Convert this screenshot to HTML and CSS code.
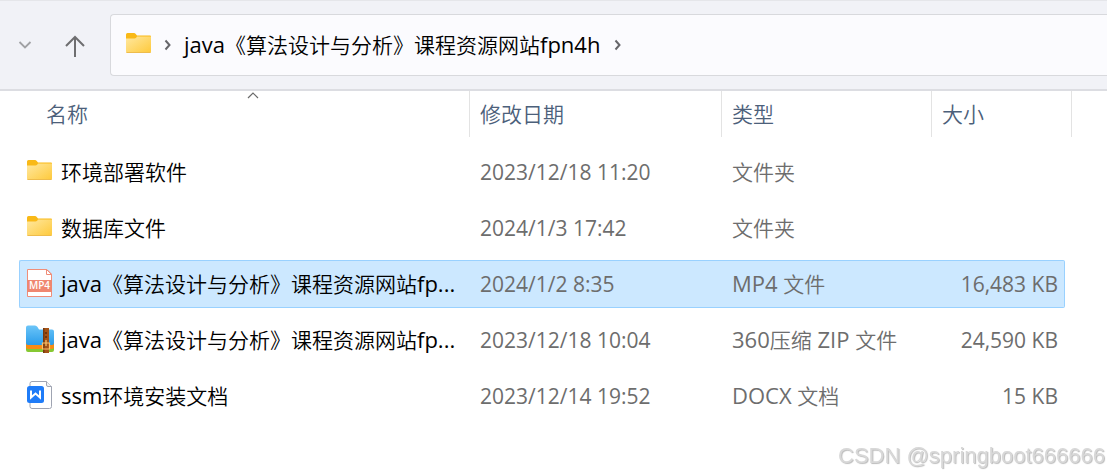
FILE: index.html
```
<!DOCTYPE html>
<html lang="zh-CN">
<head>
    <meta charset="UTF-8">
    <meta name="viewport" content="width=device-width, initial-scale=1.0">
    <title>java《算法设计与分析》课程资源网站fpn4h</title>
    <link rel="stylesheet" href="styles.css">
</head>
<body>

<!-- Shared icons -->
<svg class="defs" width="0" height="0" aria-hidden="true">
    <defs>
        <linearGradient id="folderFill" x1="0" y1="0" x2="1" y2="1">
            <stop offset="0" stop-color="#ffe8a0"/>
            <stop offset="1" stop-color="#fec93a"/>
        </linearGradient>
        <symbol id="folder" viewBox="0 0 28 28">
            <path d="M1 4.500Q1 3 2.500 3H9Q10 3 10.500 3.700L12 5.500H25Q26 5.500 26 6.500V11H1Z" fill="#f9b917"/>
            <path d="M1 8.500H9.500Q10.500 8.500 11.200 7.700L12 6.600H26V21.500Q26 23 24.500 23H2.500Q1 23 1 21.500Z" fill="url(#folderFill)"/>
            <path d="M1.500 22.500H25.500" stroke="#eebc4c" stroke-width="1"/>
        </symbol>
    </defs>
</svg>

<header class="toolbar">
    <button class="nav-btn recent" aria-label="最近浏览的位置">
        <svg width="14" height="10" viewBox="0 0 14 10"><path d="M1.500 2L7 7.500L12.500 2" fill="none" stroke="#a0a1a4" stroke-width="1.800"/></svg>
    </button>
    <button class="nav-btn up" aria-label="上移">
        <svg width="22" height="24" viewBox="0 0 22 24"><path d="M11 24V4M2 13L11 4L20 13" fill="none" stroke="#6e6e70" stroke-width="2"/></svg>
    </button>
    <nav class="address">
        <svg class="icon" viewBox="0 0 28 28"><use href="#folder"/></svg>
        <svg class="chevron" viewBox="0 0 8 12"><path d="M1.500 2.500L5.500 7L1.500 11.500" fill="none" stroke="#66666a" stroke-width="2"/></svg>
        <a href="#"><span class="latin">java</span>《算法设计与分析》课程资源网站<span class="latin">fpn4h</span></a>
        <svg class="chevron" viewBox="0 0 8 12"><path d="M1.500 2.500L5.500 7L1.500 11.500" fill="none" stroke="#66666a" stroke-width="2"/></svg>
    </nav>
</header>

<main class="files">
    <table>
        <colgroup>
            <col>
            <col class="col-date">
            <col class="col-type">
            <col class="col-size">
        </colgroup>
        <thead>
            <tr>
                <th aria-sort="ascending">
                    <button class="sort name-sort">名称
                        <svg class="sort-mark" width="12" height="7" viewBox="0 0 12 7"><path d="M1 6L6 1L11 6" fill="none" stroke="#6a6a6a" stroke-width="1.200"/></svg>
                    </button>
                </th>
                <th><button class="sort">修改日期</button></th>
                <th><button class="sort">类型</button></th>
                <th><button class="sort size-sort">大小</button></th>
            </tr>
        </thead>
        <tbody>
            <tr>
                <td class="name"><div class="file">
                    <svg class="icon" viewBox="0 0 28 28"><use href="#folder"/></svg>
                    <span>环境部署软件</span>
                </div></td>
                <td class="latin">2023/12/18 11:20</td>
                <td>文件夹</td>
                <td></td>
            </tr>
            <tr>
                <td class="name"><div class="file">
                    <svg class="icon" viewBox="0 0 28 28"><use href="#folder"/></svg>
                    <span>数据库文件</span>
                </div></td>
                <td class="latin">2024/1/3 17:42</td>
                <td>文件夹</td>
                <td></td>
            </tr>
            <tr class="selected">
                <td class="name"><div class="file">
                    <svg class="icon" viewBox="0 0 28 28">
                        <path d="M1.500 .5H21L25.500 5V27.500H1.500Z" fill="#fff" stroke="#f08d78"/>
                        <path d="M20.500 .5V5.500H25.500Z" fill="#fff" stroke="#f08d78"/>
                        <rect x="1" y="11" width="25" height="12" fill="#ef8670"/>
                        <text x="13.500" y="20" class="badge-text">MP4</text>
                    </svg>
                    <span><span class="latin">java</span>《算法设计与分析》课程资源网站<span class="latin">fp...</span></span>
                </div></td>
                <td class="latin">2024/1/2 8:35</td>
                <td><span class="latin">MP4 </span>文件</td>
                <td class="latin size">16,483 KB</td>
            </tr>
            <tr>
                <td class="name"><div class="file">
                    <svg class="icon" viewBox="0 0 28 28">
                        <defs>
                            <linearGradient id="zipBlue" x1="0" y1="0" x2="0" y2="1">
                                <stop offset="0" stop-color="#6cc5f8"/>
                                <stop offset="1" stop-color="#299cea"/>
                            </linearGradient>
                        </defs>
                        <path d="M0 19H28V25Q28 27 26 27H2Q0 27 0 25Z" fill="#86c832"/>
                        <path d="M0 17H28V22Q28 24 26 24H2Q0 24 0 22Z" fill="#f88b13"/>
                        <path d="M0 2.500Q0 .5 2 .5H9Q10.500 .5 11.500 2L13 4.500H26Q28 4.500 28 6.500V18Q28 20 26 20H2Q0 20 0 18Z" fill="url(#zipBlue)"/>
                        <path d="M17 3H23V28H17Z" fill="#a35216"/>
                        <path d="M17 3H18.500V28H17Z" fill="#75380f"/>
                        <path d="M20 7V9M20 11V13" stroke="#5e2c0b" stroke-width="1.500"/>
                        <path d="M16.500 18H23.500V24H16.500ZM20 15V21" fill="none" stroke="#fbc16b" stroke-width="1.200"/>
                    </svg>
                    <span><span class="latin">java</span>《算法设计与分析》课程资源网站<span class="latin">fp...</span></span>
                </div></td>
                <td class="latin">2023/12/18 10:04</td>
                <td><span class="latin">360</span>压缩<span class="latin"> ZIP </span>文件</td>
                <td class="latin size">24,590 KB</td>
            </tr>
            <tr>
                <td class="name"><div class="file">
                    <svg class="icon" viewBox="0 0 28 28">
                        <path d="M6 .5H20.500L25.500 5.500V25.500Q25.500 27.500 23.500 27.500H6Q4 27.500 4 25.500V2.500Q4 .5 6 .5Z" fill="#fff" stroke="#9fa4b2"/>
                        <path d="M20.500 .5V4Q20.500 5.500 22 5.500H25.500" fill="#f1f2f5" stroke="#9fa4b2"/>
                        <rect x="1" y="5" width="17" height="17" rx="2.500" fill="#1f7cf8"/>
                        <path d="M5 9.500V16.500L9.500 12.500L14 16.500V9.500" fill="none" stroke="#fff" stroke-width="2"/>
                    </svg>
                    <span><span class="latin">ssm</span>环境安装文档</span>
                </div></td>
                <td class="latin">2023/12/14 19:52</td>
                <td><span class="latin">DOCX </span>文档</td>
                <td class="latin size">15 KB</td>
            </tr>
        </tbody>
    </table>
</main>

<div class="watermark">CSDN @springboot666666</div>

</body>
</html>
```
FILE: styles.css
```
* { box-sizing: border-box; }
body { margin: 0; background: #fff; color: #000; font: 21px/32px "Noto Sans CJK SC", sans-serif; font-weight: 350; }
button { padding: 0; border: none; background: none; font: inherit; color: inherit; }
svg { display: block; flex: none; }
.defs { position: absolute; }
.latin { font-family: "Open Sans", sans-serif; font-size: 22px; font-weight: 400; white-space: pre; }
.icon { width: 28px; height: 28px; }
.badge-text { font: 600 10px "Open Sans", sans-serif; fill: #fff; text-anchor: middle; }

/* Toolbar */
.toolbar { display: flex; align-items: center; height: 91px; padding-left: 14px; background: #f1f2f7; border-top: 1px solid #e5e6ea; border-bottom: 2px solid #dcdde2; }
.nav-btn { display: flex; align-items: center; justify-content: center; height: 40px; }
.recent { width: 22px; }
.up { width: 32px; margin-left: 23px; }
.address { flex: 1; display: flex; align-items: center; height: 62px; margin-left: 19px; padding: 0 0 2px 14px; background: #fbfbfe; border: 1px solid #d8d9dd; border-right: none; border-radius: 4px 0 0 4px; white-space: nowrap; }
.address a { margin: 0 14px 0 12px; color: #000; text-decoration: none; }
.chevron { width: 8px; height: 14px; }
.address .icon + .chevron { margin-left: 11px; }

/* File list */
.files { padding: 0 42px 0 19px; }
table { width: 100%; table-layout: fixed; border-spacing: 0 8px; margin-top: -8px; }
.col-date { width: 252px; }
.col-type { width: 210px; }
.col-size { width: 133px; }
th { padding: 0 0 3px; font-weight: inherit; }
.sort { display: block; position: relative; width: 100%; height: 46px; padding: 0 0 2px 10px; border-right: 1px solid #e3e3e3; text-align: left; color: #4c607a; }
.name-sort { padding-left: 27px; }
.size-sort { width: 140px; }
.sort-mark { position: absolute; top: 1px; left: 228px; }
td { height: 48px; padding: 0 0 2px 10px; color: #6d6d6d; border: 1px solid transparent; border-width: 1px 0; white-space: nowrap; }
td.latin { padding-bottom: 0; font-size: 21px; }
.name { padding-left: 7px; color: #000; }
.file { display: flex; align-items: center; gap: 7px; }
.size { padding-right: 7px; text-align: right; }
.selected td { background: #cce8ff; border-color: #99d1ff; }
.selected td:first-child { border-left-width: 1px; border-radius: 2px 0 0 2px; padding-left: 6px; }
.selected td:last-child { border-right-width: 1px; border-radius: 0 2px 2px 0; padding-right: 6px; }

.watermark { position: fixed; right: 2px; bottom: 4px; font: 22px/30px "Liberation Sans", sans-serif; color: #d8d8d8; text-shadow: 1px 1px 1px #bbb; }
```
